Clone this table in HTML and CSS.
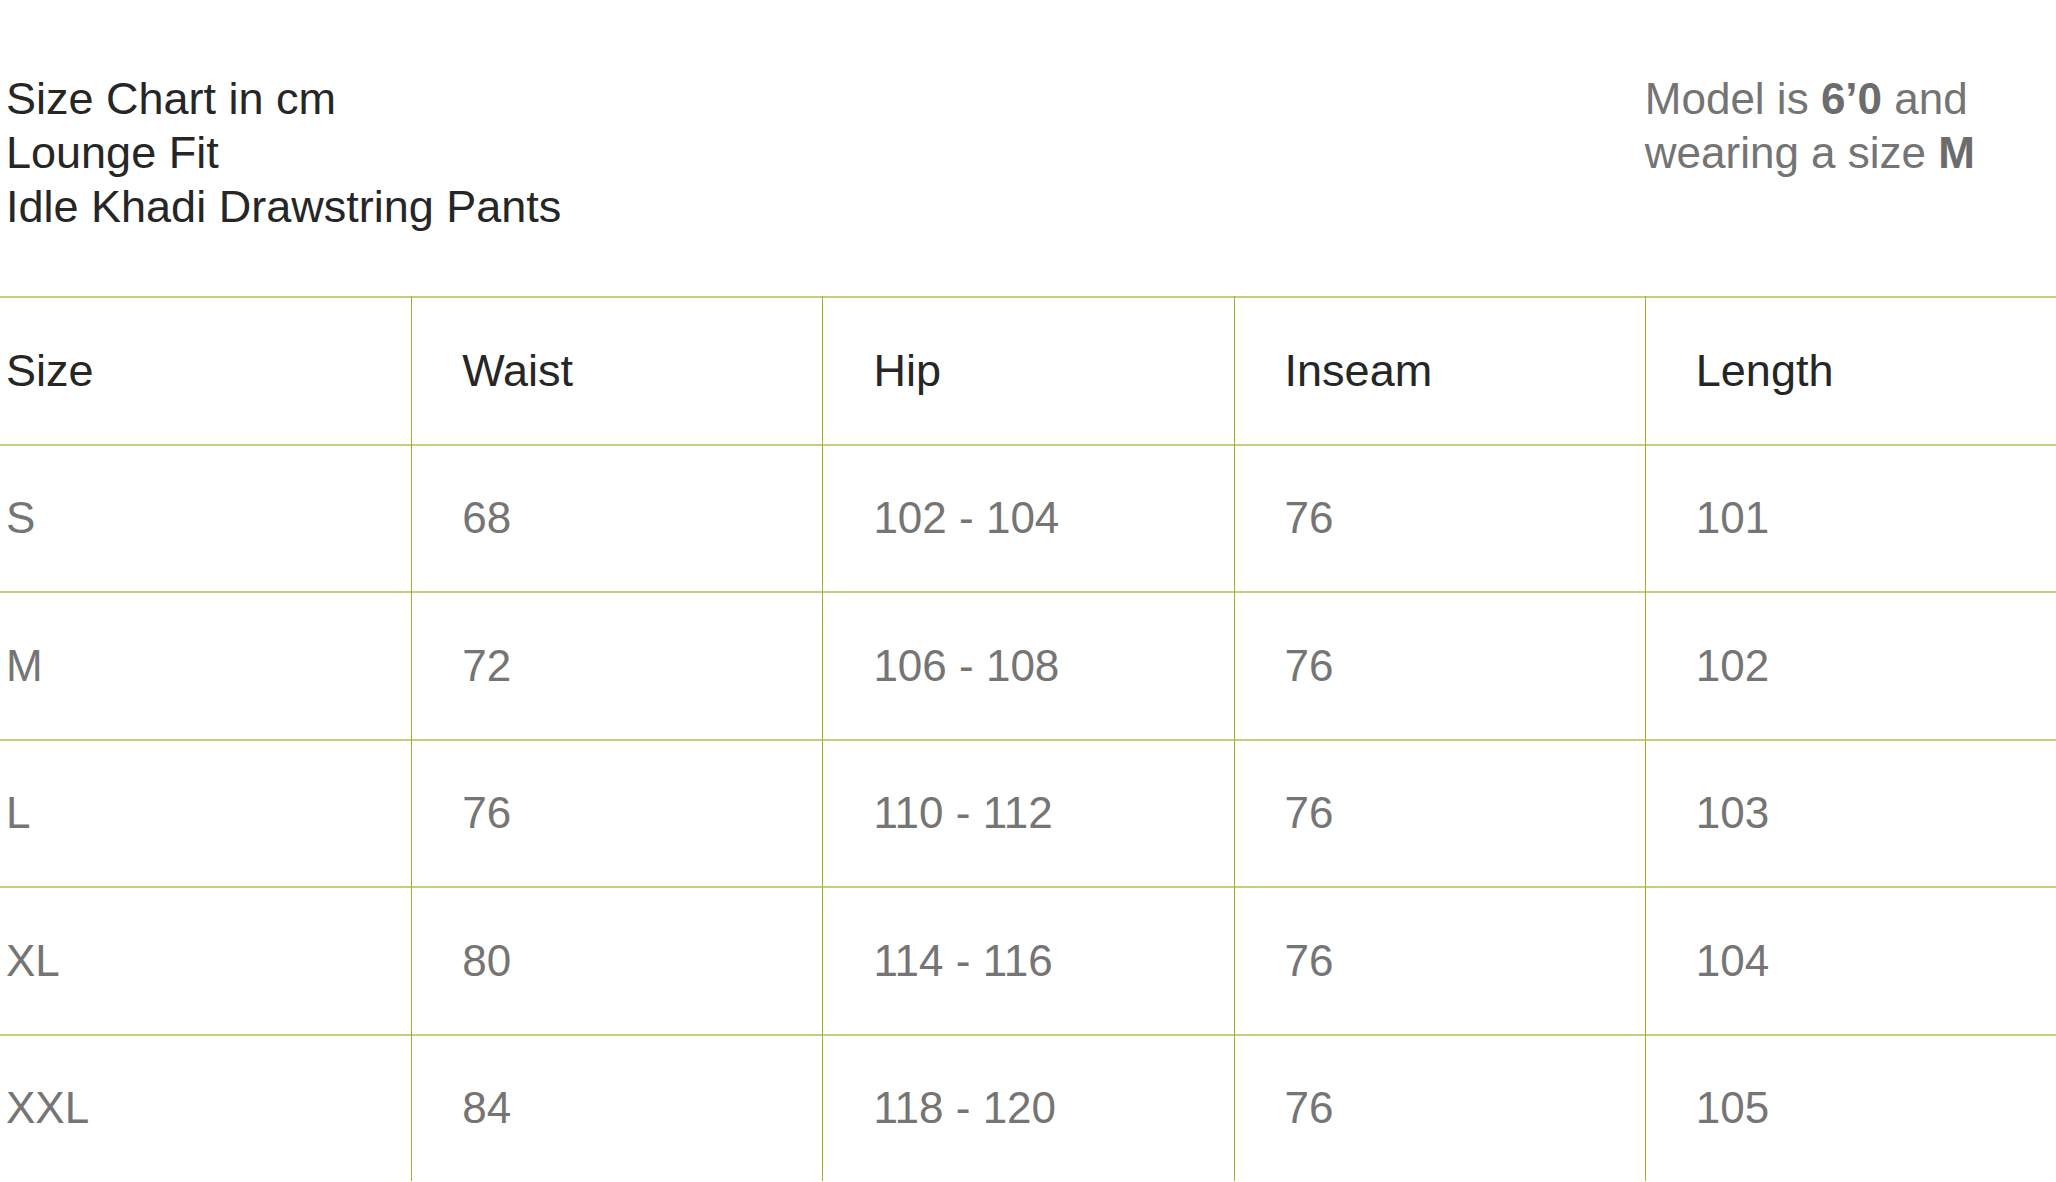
FILE: index.html
```html
<!DOCTYPE html>
<html lang="en">
<head>
<meta charset="utf-8">
<title>Size Chart</title>
<link rel="stylesheet" href="styles.css">
</head>
<body>
<div class="page">
  <header class="intro">
    <div class="title">
      <div>Size Chart in cm</div>
      <div>Lounge Fit</div>
      <div>Idle Khadi Drawstring Pants</div>
    </div>
    <div class="note">
      <div>Model is <b>6’0</b> and</div>
      <div>wearing a size <b>M</b></div>
    </div>
  </header>
  <div class="chart">
    <div class="row head">
      <div class="cell first">Size</div>
      <div class="cell">Waist</div>
      <div class="cell">Hip</div>
      <div class="cell">Inseam</div>
      <div class="cell">Length</div>
    </div>
    <div class="row">
      <div class="cell first">S</div>
      <div class="cell">68</div>
      <div class="cell">102 - 104</div>
      <div class="cell">76</div>
      <div class="cell">101</div>
    </div>
    <div class="row">
      <div class="cell first">M</div>
      <div class="cell">72</div>
      <div class="cell">106 - 108</div>
      <div class="cell">76</div>
      <div class="cell">102</div>
    </div>
    <div class="row">
      <div class="cell first">L</div>
      <div class="cell">76</div>
      <div class="cell">110 - 112</div>
      <div class="cell">76</div>
      <div class="cell">103</div>
    </div>
    <div class="row">
      <div class="cell first">XL</div>
      <div class="cell">80</div>
      <div class="cell">114 - 116</div>
      <div class="cell">76</div>
      <div class="cell">104</div>
    </div>
    <div class="row">
      <div class="cell first">XXL</div>
      <div class="cell">84</div>
      <div class="cell">118 - 120</div>
      <div class="cell">76</div>
      <div class="cell">105</div>
    </div>
  </div>
</div>
</body>
</html>
```

FILE: styles.css
```css
html, body {
  margin: 0;
  padding: 0;
  background: #ffffff;
}

body {
  font-family: "Liberation Sans", Arial, sans-serif;
  font-size: 45px;
  line-height: 54px;
  overflow: hidden;
}

.page {
  width: 2056px;
}

.intro {
  display: grid;
  grid-template-columns: repeat(5, 1fr);
  padding-top: 72px;
  height: 296px;
  box-sizing: border-box;
}

.title {
  grid-column: 1 / 5;
  padding-left: 6px;
  color: #262626;
}

.note {
  grid-column: 5 / 6;
  padding-left: 0;
  font-size: 44px;
  color: #747474;
}

.note b {
  font-weight: 700;
  color: #6c6c6c;
}

.chart {
  display: flex;
  flex-direction: column;
}

.row {
  display: grid;
  grid-template-columns: repeat(5, 1fr);
  height: 147.5px;
  box-sizing: border-box;
  border-top: 2px solid #c6cd80;
  color: #757575;
  font-size: 44px;
}

.row.head {
  color: #262626;
  font-size: 45px;
}

.cell {
  display: flex;
  align-items: center;
  padding-left: 50px;
  border-left: 1px solid #a4ae27;
  margin-top: -2px;
  padding-top: 2px;
}

.cell.first {
  padding-left: 6px;
  border-left: none;
}
```
